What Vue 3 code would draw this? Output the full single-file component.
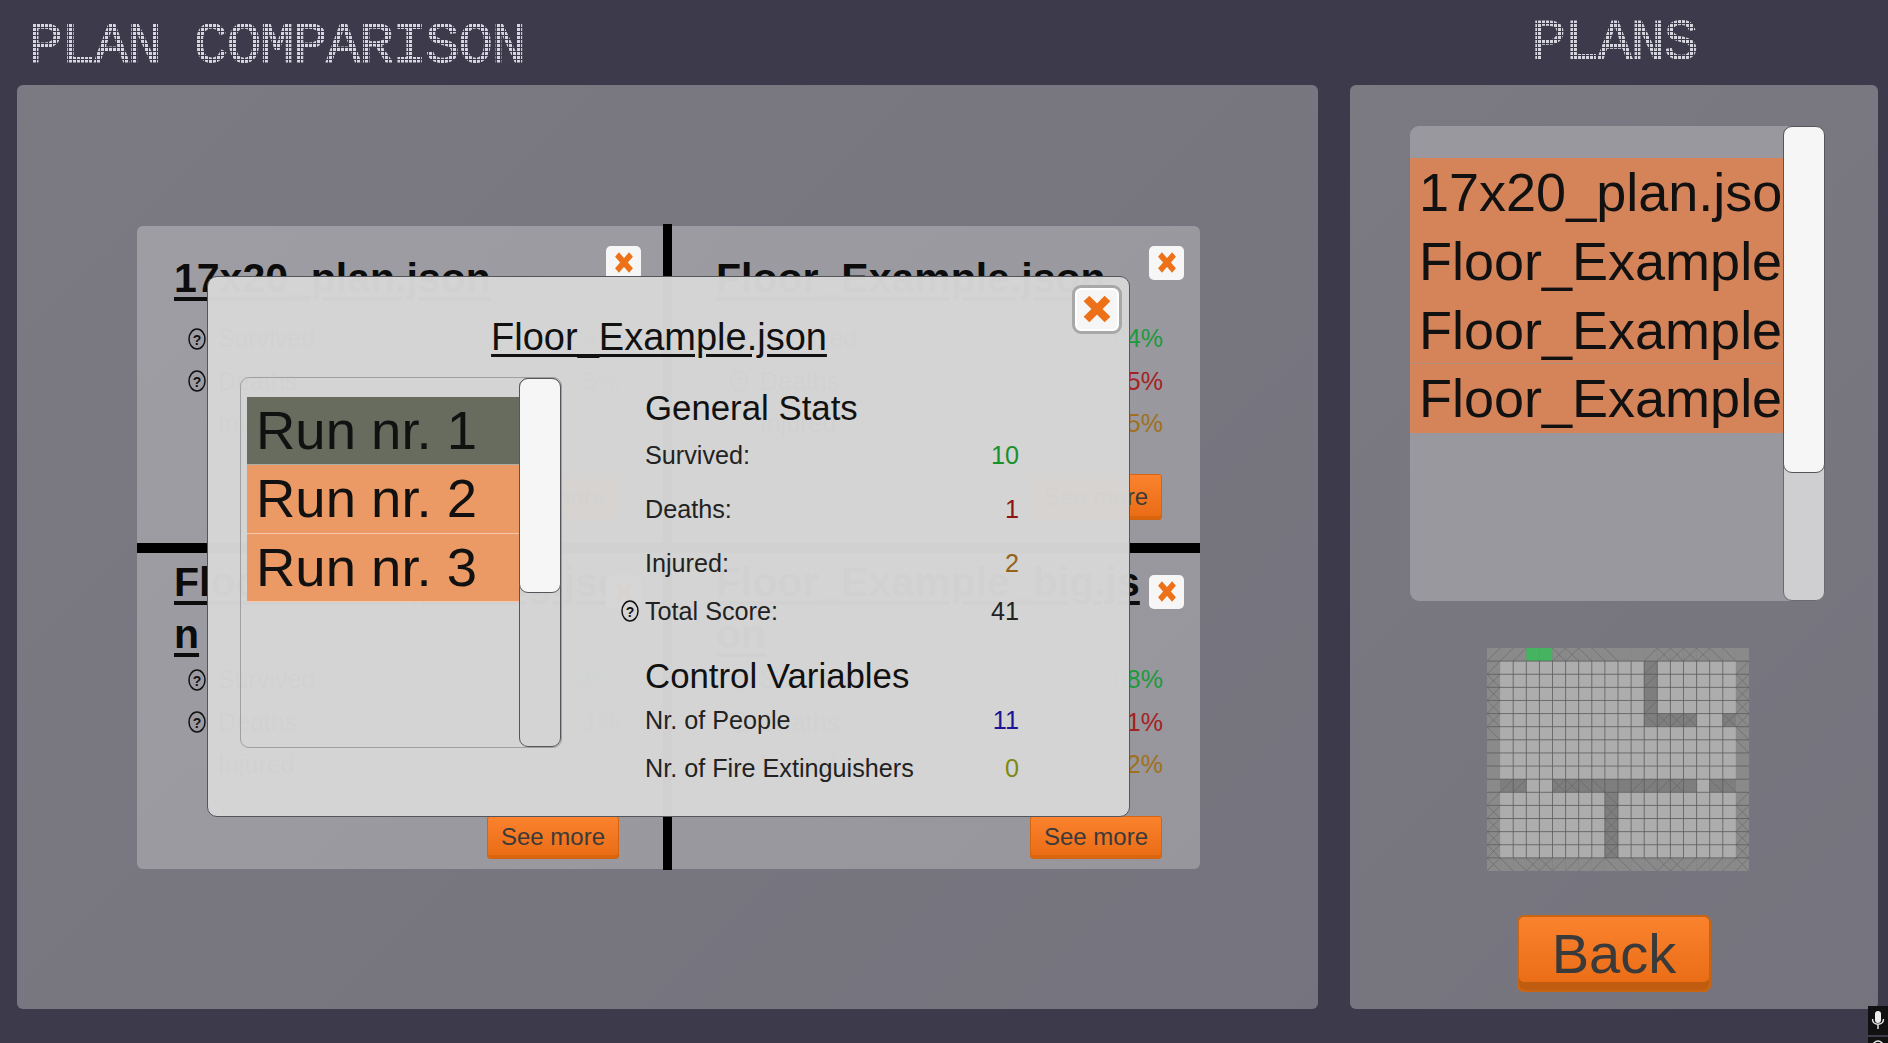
<template>
  <div class="page">
    <section class="col col-left">
      <h1 class="dot-title title-left">PLAN COMPARISON</h1>
      <div class="panel panel-left">
        <div class="compare">
          <template v-for="(card, i) in cards" :key="i">
            <article class="card" :class="card.cls">
              <h2 class="card-title">
                <template v-for="(line, j) in card.title" :key="j">{{ line }}<br v-if="j < card.title.length - 1" /></template>
              </h2>
              <div class="card-stats">
                <div v-for="row in card.rows" :key="row.label" class="card-row">
                  <svg v-if="row.help" class="help" viewBox="0 0 18 22"><ellipse cx="9" cy="11" rx="8" ry="10" /><text x="9" y="16.5" text-anchor="middle">?</text></svg>
                  <span v-else class="help"></span>
                  <span class="card-label">{{ row.label }}</span>
                  <span class="card-value" :style="{ color: row.color }">{{ row.value }}</span>
                </div>
              </div>
              <button class="see-more">See more</button>
              <button class="close-small" aria-label="Remove">
                <svg viewBox="0 0 20 20" preserveAspectRatio="none"><path d="M3 3 17 17M17 3 3 17" /></svg>
              </button>
            </article>
            <div v-if="i === 0" class="vline vline-top"></div>
            <div v-if="i === 1" class="hline"></div>
            <div v-if="i === 2" class="vline vline-bottom"></div>
          </template>

          <div class="modal" role="dialog">
            <button class="close-big" aria-label="Close">
              <svg viewBox="0 0 20 20"><path d="M3 3 17 17M17 3 3 17" /></svg>
            </button>
            <h2 class="modal-title">Floor_Example.json</h2>
            <div class="modal-body">
              <div class="run-list">
                <div class="run-items">
                  <div v-for="(run, i) in runs" :key="run" class="run" :class="{ selected: i === 0 }">{{ run }}</div>
                </div>
                <div class="track"><div class="thumb run-thumb"></div></div>
              </div>
              <div class="stats">
                <h3 class="stats-heading">General Stats</h3>
                <div v-for="s in general" :key="s.label" class="stat" :class="{ short: s.help }">
                  <svg v-if="s.help" class="help help-out" viewBox="0 0 18 22"><ellipse cx="9" cy="11" rx="8" ry="10" /><text x="9" y="16.5" text-anchor="middle">?</text></svg>
                  <span>{{ s.label }}</span>
                  <span :style="{ color: s.color }">{{ s.value }}</span>
                </div>
                <h3 class="stats-heading second">Control Variables</h3>
                <div v-for="s in control" :key="s.label" class="stat ctrl">
                  <span>{{ s.label }}</span>
                  <span :style="{ color: s.color }">{{ s.value }}</span>
                </div>
              </div>
            </div>
          </div>
        </div>
      </div>
    </section>

    <section class="col col-right">
      <h1 class="dot-title title-right">PLANS</h1>
      <div class="panel panel-right">
        <div class="plan-list">
          <div class="plan-items">
            <div v-for="(plan, i) in plans" :key="i" class="plan">{{ plan }}</div>
          </div>
          <div class="track plan-track"><div class="thumb plan-thumb"></div></div>
        </div>

        <svg class="floor-map" viewBox="0 0 260 221" preserveAspectRatio="none">
          <rect v-for="c in mapCells" :key="c.k" :x="c.x" :y="c.y" width="13" height="13" :fill="c.fill" />
          <path :d="diagPath" class="map-diag" />
          <path :d="gridPath" class="map-grid" />
        </svg>

        <button class="back">Back</button>
      </div>
    </section>

    <div class="side-tool tool-mic">
      <svg viewBox="0 0 20 28"><rect x="7" y="5" width="6" height="12" rx="3" fill="#eee" /><path d="M4.5 13c0 7 11 7 11 0M10 19v4" fill="none" stroke="#eee" stroke-width="1.4" /></svg>
    </div>
    <div class="side-tool tool-next">
      <svg viewBox="0 0 20 8"><circle cx="10" cy="9" r="5" fill="none" stroke="#eee" stroke-width="1.5" /></svg>
    </div>
  </div>
</template>

<script setup>
const green = '#1d9a3c'
const red = '#a52222'
const amber = '#a0701c'

const stats = (a, b, c) => [
  { label: 'Survived', value: a, color: green, help: true },
  { label: 'Deaths', value: b, color: red, help: true },
  { label: 'Injured', value: c, color: amber, help: false }
]

const cards = [
  { cls: 'c-tl', title: ['17x20_plan.json'], rows: stats('84%', '5%', '5%') },
  { cls: 'c-tr', title: ['Floor_Example.json'], rows: stats('84%', '5%', '5%') },
  { cls: 'c-bl', title: ['Floor_Example_big.jso', 'n'], rows: stats('88%', '1%', '2%') },
  { cls: 'c-br', title: ['Floor_Example_big.js', 'on'], rows: stats('88%', '1%', '2%') }
]

const runs = ['Run nr. 1', 'Run nr. 2', 'Run nr. 3']

const general = [
  { label: 'Survived:', value: 10, color: '#16912c' },
  { label: 'Deaths:', value: 1, color: '#8e1414' },
  { label: 'Injured:', value: 2, color: '#94621a' },
  { label: 'Total Score:', value: 41, color: '#222', help: true }
]

const control = [
  { label: 'Nr. of People', value: 11, color: '#1c1496' },
  { label: 'Nr. of Fire Extinguishers', value: 0, color: '#7c8a14' }
]

const plans = ['17x20_plan.json', 'Floor_Example.json', 'Floor_Example.json', 'Floor_Example.json']

// floor plan: # outer wall, w inner wall, . floor, g exit
const layout = [
  '###gg###############',
  '#...........w......#',
  '#...........w......#',
  '#...........w......#',
  '#...........w......#',
  '#...........wwww..w#',
  '#..................#',
  '#..................#',
  '#..................#',
  '#..................#',
  '#ww..wwwwwwwwwww.ww#',
  '#........w.........#',
  '#........w.........#',
  '#........w.........#',
  '#........w.........#',
  '#........w.........#',
  '####################'
]

// diagonals drawn on the wall cells, row:col -> kind
const diagRows = {
  0: '///  xx\\\\\\  /xxxx\\\\ /',
  1: '/           /      /',
  2: 'x           /      x',
  3: 'x                  x',
  4: 'x           /      x',
  5: 'x           \\xxx  xx',
  6: '\\                  \\',
  7: '                   \\',
  10: ' //  xx\\\\  ///x  \\\\  ',
  11: '/        \\         /',
  12: 'x        x         x',
  13: 'x        x         x',
  14: 'x        x         x',
  15: 'x        x         x',
  16: 'x\\\\xx////\\\\\\\\xx////x'
}

const size = 13
const colors = { '#': '#8a8a8a', w: '#7e7e7e', '.': '#adadad', g: '#45b35f' }

const mapCells = layout.flatMap((row, y) =>
  row.split('').map((ch, x) => ({ k: `${x}-${y}`, x: x * size, y: y * size, fill: colors[ch] }))
)

let diag = ''
for (const y of Object.keys(diagRows)) {
  diagRows[y].split('').forEach((ch, x) => {
    const l = x * size
    const t = y * size
    if (ch === '/' || ch === 'x') diag += `M${l} ${t + size}L${l + size} ${t}`
    if (ch === '\\' || ch === 'x') diag += `M${l} ${t}L${l + size} ${t + size}`
  })
}
const diagPath = diag

let grid = ''
for (let y = 1; y < 17; y++) grid += `M0 ${y * size}H260`
for (let x = 2; x < 19; x++) grid += `M${x * size} ${size}V${16 * size}`
const gridPath = grid
</script>

<style scoped>
.page {
  position: relative;
  display: flex;
  gap: 32px;
  height: 1043px;
  box-sizing: border-box;
  padding: 0 10px 34px 17px;
  overflow: hidden;
  background: #3d3a4b;
  font-family: "Liberation Sans", Arial, sans-serif;
  color: #111;
}

.col { display: flex; flex-direction: column; }
.col-left { width: 1301px; }
.col-right { width: 528px; }

.dot-title {
  height: 85px;
  margin: 0;
  box-sizing: border-box;
  font-family: "Liberation Mono", "DejaVu Sans Mono", monospace;
  font-size: 58px;
  font-weight: 400;
  letter-spacing: -1.7px;
  white-space: nowrap;
  color: transparent;
  -webkit-text-stroke: 1px transparent;
  background-image: conic-gradient(at 75% 75%, transparent 270deg, #d6d6de 270deg);
  background-size: 4px 4px;
  -webkit-background-clip: text;
  background-clip: text;
}
.title-left { padding-left: 11px; line-height: 93px; }
.title-right { text-align: center; line-height: 87px; }

.panel {
  flex: 1;
  border-radius: 6px;
  background: linear-gradient(135deg, #7b7a83, #75747e);
}
.panel-left {
  display: flex;
  align-items: center;
  justify-content: center;
}
.panel-right {
  display: flex;
  flex-direction: column;
  align-items: center;
  padding: 41px 53px 0 60px;
}

.compare {
  position: relative;
  display: grid;
  grid-template-columns: 526px 9px 528px;
  grid-template-rows: 317px 10px 316px;
  margin-left: 2px;
  border-radius: 6px;
  background: linear-gradient(135deg, #9d9da3, #96969c);
}

.card {
  position: relative;
  display: flex;
  flex-direction: column;
  box-sizing: border-box;
  min-width: 0;
  padding: 27px 43px 23px 37px;
}
.c-tr, .c-br { padding-right: 37px; padding-left: 44px; }
.c-bl, .c-br { padding-top: 3px; padding-bottom: 10px; }

.card-title {
  margin: 0 0 15px;
  font-size: 41px;
  line-height: 50px;
  font-weight: 700;
  white-space: nowrap;
  color: #0c0c0c;
  text-decoration: underline;
  text-underline-offset: 5px;
}
.c-bl .card-title, .c-br .card-title { margin-bottom: -1px; line-height: 52px; }

.card-row {
  display: flex;
  align-items: center;
  height: 42.5px;
  padding-left: 14px;
  font-size: 25px;
}
.card-label { margin-left: 12px; color: #222; }
.card-value { margin-left: auto; }

.help {
  flex: none;
  width: 18px;
  height: 22px;
}
.help ellipse { fill: none; stroke: #111; stroke-width: 1.5; }
.help text {
  font-family: "Liberation Sans", Arial, sans-serif;
  font-size: 14px;
  font-weight: 700;
  fill: #111;
}

.see-more, .back {
  display: block;
  box-sizing: border-box;
  border: 1px solid #d4640f;
  border-radius: 3px;
  background: linear-gradient(#fb822e, #e96b14);
  box-shadow: inset 0 -3px 0 #d9660f;
  color: #3a3a3a;
  font-family: inherit;
  padding: 0;
}
.see-more {
  width: 132px;
  height: 46px;
  margin-top: auto;
  margin-left: auto;
  margin-right: 1px;
  font-size: 24px;
}
.c-bl .see-more, .c-br .see-more { height: 43px; }

.close-small, .close-big {
  position: absolute;
  display: flex;
  align-items: center;
  justify-content: center;
  padding: 0;
  box-sizing: border-box;
  background: #f6f6f6;
}
.close-small {
  top: 20px;
  right: 22px;
  width: 35px;
  height: 34px;
  border: none;
  border-radius: 5px;
}
.c-tr .close-small, .c-br .close-small { right: 16px; }
.c-bl .close-small, .c-br .close-small { top: 22px; }
.close-small svg { width: 20px; height: 23px; }
.close-big {
  top: 8px;
  right: 7px;
  width: 50px;
  height: 49px;
  border: 3px solid #a8a8a8;
  border-radius: 9px;
  box-shadow: inset 0 0 0 2px #fff;
}
.close-big svg { width: 30px; height: 30px; }
.close-small path, .close-big path {
  fill: none;
  stroke: #ec7118;
  stroke-width: 5.4;
  stroke-linecap: butt;
}

.vline { background: #000; width: 9px; justify-self: center; }
.vline-top { grid-column: 2; grid-row: 1; margin-top: -2px; }
.vline-bottom { grid-column: 2; grid-row: 3; margin-bottom: -1px; }
.hline { grid-column: 1 / 4; grid-row: 2; background: #000; }

.modal {
  position: absolute;
  top: 50px;
  left: 70px;
  width: 923px;
  height: 541px;
  box-sizing: border-box;
  padding: 38px 0 0 32px;
  border: 1px solid #55555c;
  border-radius: 10px;
  background: rgba(213, 213, 213, 0.98);
}
.modal-title {
  margin: 0 0 18px;
  padding-right: 51px;
  font-size: 38px;
  line-height: 44px;
  font-weight: 400;
  text-align: center;
  text-decoration: underline;
  text-underline-offset: 4px;
}
.modal-body { display: flex; }

.run-list {
  display: flex;
  flex: none;
  width: 322px;
  height: 371px;
  box-sizing: border-box;
  padding-left: 6px;
  border: 1px solid #a0a0a0;
  border-radius: 9px;
}
.run-items { flex: 1; padding-top: 19px; min-width: 0; }
.run {
  height: 68.5px;
  box-sizing: border-box;
  padding-left: 9px;
  border-bottom: 1px solid rgba(255, 255, 255, 0.45);
  background: #eb9a65;
  font-size: 54.5px;
  line-height: 68px;
  white-space: nowrap;
  overflow: hidden;
}
.run.selected { background: #676c5e; }

.track {
  flex: none;
  width: 42px;
  box-sizing: border-box;
  border: 1px solid #55555c;
  border-radius: 9px;
}
.plan-track { background: #cfcfd2; border-color: #6a6a72; }
.thumb {
  margin: -1px;
  border: 1px solid #55555c;
  border-radius: 9px;
  background: #f6f6f6;
}
.run-thumb { height: 213px; }
.plan-thumb { height: 345px; }

.stats {
  flex: none;
  width: 374px;
  margin-left: 83px;
  margin-top: 9px;
}
.stats-heading {
  margin: 0;
  font-size: 34.8px;
  line-height: 43px;
  font-weight: 400;
  color: #111;
}
.stats-heading.second { margin-top: 22px; }
.stat {
  position: relative;
  display: flex;
  align-items: center;
  justify-content: space-between;
  height: 54px;
  font-size: 25.2px;
  color: #222;
}
.stat.short { height: 41px; }
.stat.ctrl { height: 48px; }
.help-out {
  position: absolute;
  left: -25px;
  width: 20px;
  height: 22px;
}

.plan-list {
  display: flex;
  flex: none;
  width: 415px;
  height: 475px;
  box-sizing: border-box;
  border-radius: 9px;
  background: #98989e;
}
.plan-items { flex: 1; min-width: 0; padding-top: 32px; }
.plan {
  height: 68.75px;
  box-sizing: border-box;
  padding-left: 9px;
  background: #d5845a;
  font-size: 54px;
  line-height: 68px;
  white-space: nowrap;
  overflow: hidden;
}
.plan:nth-child(3) { border-bottom: 1px solid rgba(150, 150, 150, 0.5); }

.floor-map {
  flex: none;
  width: 262px;
  height: 223px;
  margin-top: 47px;
  filter: blur(0.3px);
}
.map-grid { fill: none; stroke: #5c5c5c; stroke-width: 0.75; }
.map-diag { fill: none; stroke: #5c5c5c; stroke-width: 0.6; opacity: 0.8; }

.back {
  width: 194px;
  height: 77px;
  margin: 44px 7px 0 0;
  border: 2px solid #c96512;
  border-radius: 7px;
  box-shadow: inset 0 -8px 0 #bf5c10;
  font-size: 56px;
  line-height: 66px;
}

.side-tool {
  position: absolute;
  right: 0;
  width: 20px;
  background: #111;
}
.side-tool svg { display: block; width: 20px; }
.tool-mic { top: 1006px; height: 29px; }
.tool-next { top: 1037px; height: 6px; overflow: hidden; }
</style>

<style>
html, body { background: #3d3a4b; }
</style>
